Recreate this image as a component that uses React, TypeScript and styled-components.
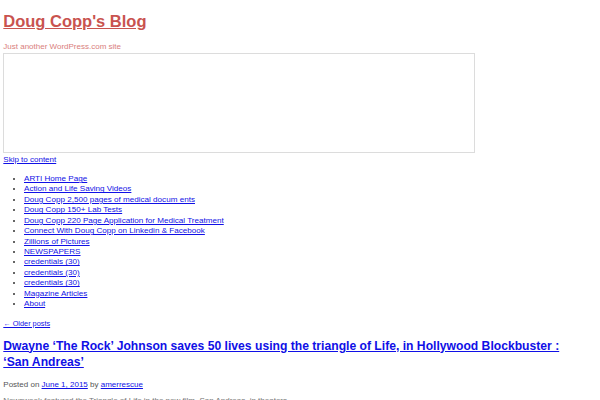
import styled, { createGlobalStyle } from 'styled-components';

const GlobalStyle = createGlobalStyle`
    html, body {
        margin: 0;
        padding: 0;
        background: #fff;
    }
    body {
        font-family: "Liberation Sans", Arial, sans-serif;
        color: #333;
    }
    a {
        color: #1010e6;
    }
`

const Page = styled.div`
    padding: 0 3.3px;
    height: 400px;
    overflow: hidden;
`

const SiteTitle = styled.h1`
    margin: 11.4px 0 0;
    font-size: 16.5px;
    line-height: 20px;
    font-weight: bold;
    a {
        color: #c9534f;
        text-decoration: underline;
    }
`

const Tagline = styled.p`
    margin: 11px 0 0;
    font-size: 8px;
    line-height: 10.67px;
    color: #d9807c;
`

const Banner = styled.div`
    box-sizing: border-box;
    width: 472px;
    height: 100px;
    border: 1px solid #dcdcdc;
`

const SkipLink = styled.a`
    display: block;
    margin-top: 2px;
    font-size: 8px;
    line-height: 10.67px;
`

const Menu = styled.ul`
    margin: 8.3px 0 0;
    padding-left: 20.7px;
    font-size: 8.1px;
    line-height: 10.42px;
`

const MenuItem = styled.li`
    color: #333;
`

const OlderPosts = styled.a`
    display: block;
    margin-top: 9.2px;
    font-size: 7.33px;
    line-height: 10px;
`

const PostTitle = styled.h2`
    margin: 8.8px 0 0;
    max-width: 575px;
    font-size: 12.15px;
    line-height: 16px;
    font-weight: bold;
`

const PostMeta = styled.div`
    margin-top: 10.2px;
    font-size: 8px;
    line-height: 10.67px;
    color: #555;
`

const PostBody = styled.p`
    margin: 6px 0 0;
    font-size: 8px;
    line-height: 10.67px;
    color: #777;
`

const menu = [
    'ARTI Home Page',
    'Action and Life Saving Videos',
    'Doug Copp 2,500 pages of medical docum ents',
    'Doug Copp 150+ Lab Tests',
    'Doug Copp 220 Page Application for Medical Treatment',
    'Connect With Doug Copp on Linkedin & Facebook',
    'Zillions of Pictures',
    'NEWSPAPERS',
    'credentials (30)',
    'credentials (30)',
    'credentials (30)',
    'Magazine Articles',
    'About',
]

function App() {
    return (
        <>
            <GlobalStyle />
            <Page>
                <SiteTitle><a href="#">Doug Copp's Blog</a></SiteTitle>
                <Tagline>Just another WordPress.com site</Tagline>
                <Banner />
                <SkipLink href="#">Skip to content</SkipLink>
                <Menu>
                    {menu.map((item, i) => (
                        <MenuItem key={i}><a href="#">{item}</a></MenuItem>
                    ))}
                </Menu>
                <OlderPosts href="#">← Older posts</OlderPosts>
                <PostTitle>
                    <a href="#">Dwayne ‘The Rock’ Johnson saves 50 lives using the triangle of Life, in Hollywood Blockbuster : ‘San Andreas’</a>
                </PostTitle>
                <PostMeta>
                    Posted on <a href="#">June 1, 2015</a> by <a href="#">amerrescue</a>
                </PostMeta>
                <PostBody>Newsweek featured the Triangle of Life in the new film, San Andreas, in theaters.</PostBody>
            </Page>
        </>
    )
}

export default App
